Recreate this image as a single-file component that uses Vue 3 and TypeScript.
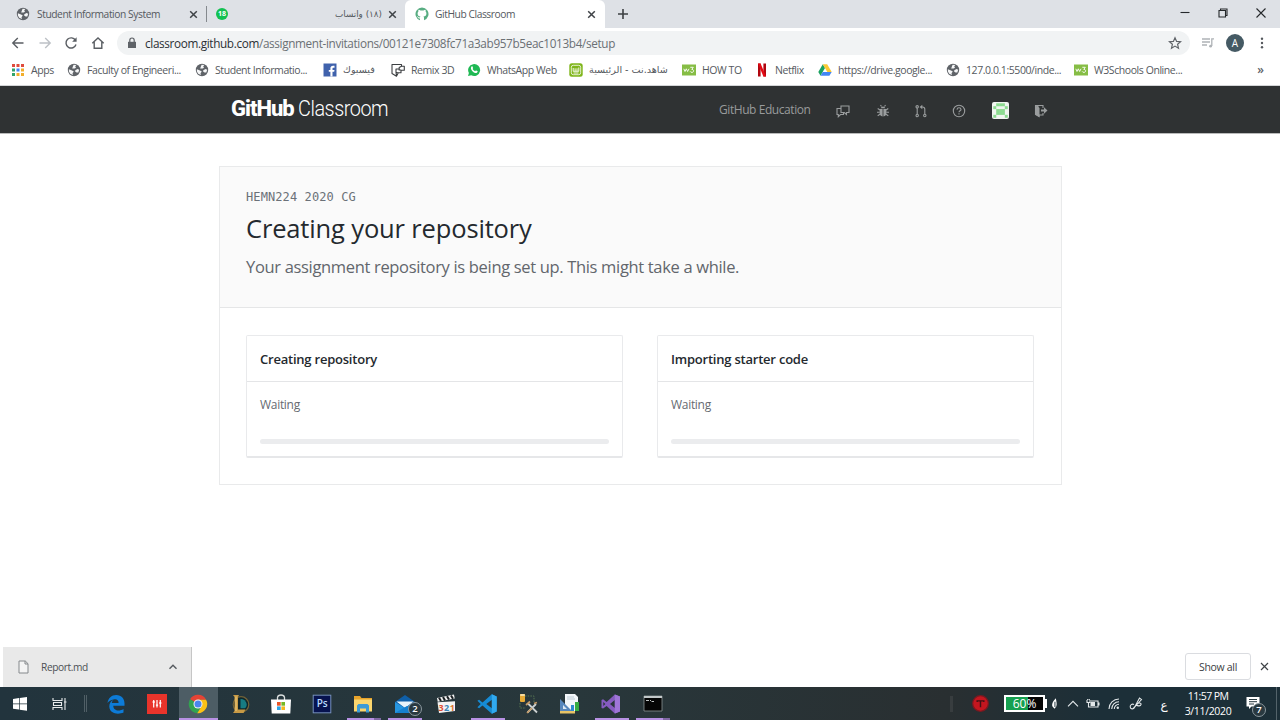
<script setup lang="ts">
interface Bookmark {
  icon: string
  label: string
  width: number
  rtl?: boolean
}

const bookmarks: Bookmark[] = [
  { icon: 'apps', label: 'Apps', width: 56 },
  { icon: 'globe', label: 'Faculty of Engineeri...', width: 128 },
  { icon: 'globe', label: 'Student Informatio...', width: 128 },
  { icon: 'facebook', label: 'فيسبوك', width: 68, rtl: true },
  { icon: 'remix', label: 'Remix 3D', width: 76 },
  { icon: 'whatsapp', label: 'WhatsApp Web', width: 102 },
  { icon: 'shahid', label: 'شاهد.نت - الرئيسية', width: 113, rtl: true },
  { icon: 'w3', label: 'HOW TO', width: 73 },
  { icon: 'netflix', label: 'Netflix', width: 63 },
  { icon: 'drive', label: 'https://drive.google...', width: 128 },
  { icon: 'globe', label: '127.0.0.1:5500/inde...', width: 128 },
  { icon: 'w3', label: 'W3Schools Online...', width: 120 },
]

const steps: { title: string; status: string }[] = [
  { title: 'Creating repository', status: 'Waiting' },
  { title: 'Importing starter code', status: 'Waiting' },
]

interface TaskApp {
  icon: string
  state?: 'active' | 'open' | 'stacked'
  badge?: string
}

const apps: TaskApp[] = [
  { icon: 'edge' },
  { icon: 'mixer' },
  { icon: 'chrome', state: 'active' },
  { icon: 'league' },
  { icon: 'store' },
  { icon: 'photoshop' },
  { icon: 'explorer', state: 'stacked' },
  { icon: 'mail', state: 'open', badge: '2' },
  { icon: 'clapper' },
  { icon: 'vscode', state: 'open' },
  { icon: 'tools' },
  { icon: 'chart' },
  { icon: 'visualstudio', state: 'open' },
  { icon: 'cmd', state: 'stacked' },
]

// Filled cells of the 5x5 identicon
const identicon: [number, number][] = [
  [1, 0], [2, 0], [3, 0],
  [0, 1], [4, 1],
  [1, 2], [2, 2], [3, 2],
  [1, 3], [2, 3], [3, 3],
  [0, 4], [4, 4],
]
</script>

<template>
  <div class="screen">
    <svg class="sprite" aria-hidden="true">
      <symbol id="globe" viewBox="0 0 14 14">
        <circle cx="7" cy="7" r="6.2" fill="#5f6368" />
        <path d="M1.9 6.2 5 7.4 6.8 8.6 5.5 10.2 6 12 3.2 10.7 1.9 8.4ZM6.6 1.8 9.3 2.1 8.2 3.6 9 4.7 7.6 5.4 5.2 5.6 5.8 3.7ZM8.3 7.2 10.5 6 12.2 6.8 11.3 9.4 9.6 9.6 8.1 8.5Z" fill="#f5f6f7" />
      </symbol>
      <symbol id="apps" viewBox="0 0 14 14">
        <path d="M1 1h3v3H1zM5.500 1h3v3h-3zM10 1h3v3h-3z" fill="#df4b3d" />
        <path d="M1 5.500h3v3H1zM1 10h3v3H1z" fill="#2fa36b" />
        <path d="M5.500 5.500h3v3h-3z" fill="#4285f4" />
        <path d="M10 5.500h3v3h-3zM5.500 10h3v3h-3zM10 10h3v3h-3z" fill="#f2ae2b" />
      </symbol>
      <symbol id="facebook" viewBox="0 0 14 14">
        <path d="M.5.5h13v13H.5z" fill="#4062ac" />
        <path d="M7.400 13.500V8.800H5.800V6.900h1.600V5.500c0-1.800 1-2.700 2.600-2.700h1.500v1.900h-1c-.8 0-1 .3-1 1v1.200h2l-.3 1.900H9.500v4.700z" fill="#fff" />
      </symbol>
      <symbol id="remix" viewBox="0 0 14 14">
        <path d="M1 1.500h9.500v1.800h2.800v4H10v2.500H7.300L5.500 13.200 1 10.500zM10.500 3.300 8.200 4.500v3M10 7.300 7.500 6H5v3.300M5 9.300l2.300.7M5.500 13.200 5 9.300" fill="none" stroke="#3c3f42" stroke-width="1.100" stroke-linejoin="round" />
      </symbol>
      <symbol id="whatsapp" viewBox="0 0 14 14">
        <path d="M1 13l.9-3A6 6 0 1 1 4.200 12.300Z" fill="#1fb954" />
        <path d="M4.400 3.700c.5-.5 1-.4 1.200.1l.5 1.100c.1.400-.4.800-.5 1 .5 1 1.300 1.800 2.500 2.300.3-.2.600-.8 1-.7l1.300.6c.5.300.2 1.300-.5 1.700-1 .6-2.700 0-4.200-1.400C4.200 6.900 3.300 5 4.400 3.700Z" fill="#fff" />
      </symbol>
      <symbol id="shahid" viewBox="0 0 14 14">
        <rect x=".3" y=".3" width="13.400" height="13.400" rx="2.500" fill="#7fb51b" />
        <rect x="2.300" y="2.300" width="9.400" height="9.400" rx="2" fill="none" stroke="#fff" stroke-width=".8" />
        <path d="M4.200 5v3.300h5.600V4.500M6.100 8V5.300M8 8V5.300M4.500 10h5" fill="none" stroke="#fff" stroke-width=".9" />
      </symbol>
      <symbol id="w3" viewBox="0 0 14 14">
        <path d="M0 1.500h14v11H0z" fill="#86bd45" />
        <path d="M1.800 5.800 3 8.500l1.300-2.700 1.300 2.700L7 5.800M8.300 4.300h3L9.800 6.400c2.400-.2 2.300 3 .2 3-.9 0-1.500-.4-1.800-1" fill="none" stroke="#fff" stroke-width=".9" />
      </symbol>
      <symbol id="netflix" viewBox="0 0 14 14">
        <path d="M3 .5h2.600v13H3zM8.400.5H11v13H8.400z" fill="#b1060f" />
        <path d="M3 .5h2.600L11 13.500H8.400z" fill="#e50914" />
      </symbol>
      <symbol id="drive" viewBox="0 0 14 14">
        <path d="M4.800 1.300.3 9l2.200 3.700L7 5z" fill="#1ba261" />
        <path d="M4.800 1.300h4.400L13.700 9H9.300z" fill="#fbc934" />
        <path d="M2.500 12.700 4.800 9h8.900l-2.300 3.700z" fill="#4286f5" />
      </symbol>
      <symbol id="edge" viewBox="0 0 20 20">
        <path d="M1.500 9C2.200 4 5.500 1 10.200 1 15.600 1 18.500 5 18.500 9.500v2.200H7.300c.1 5.400 6.300 5.700 10.200 3.200v3.700C13 20.500 3.800 20.500 3.300 12.800c-.2-3 1.400-5.500 4-6.700-1 1-1.300 2-1.500 3h6.800c0-3-1.500-4-4-3.800C5.600 5.500 3 7 1.500 9Z" fill="#0d7bd7" />
      </symbol>
      <symbol id="mixer" viewBox="0 0 20 20">
        <path d="M0 0h20v20H0z" fill="#e9342b" />
        <path d="M6.700 6v7.500M10 6v7.500M13.300 6v7.500" stroke="#fff" stroke-width="1.200" />
        <path d="M5.600 8h2.200M8.900 11.200h2.200M12.200 9h2.200" stroke="#fff" stroke-width="1.300" />
      </symbol>
      <symbol id="chrome" viewBox="0 0 20 20">
        <path d="M10 10 2 5.300A9.200 9.200 0 0 1 18.100 5.700H10Z" fill="#e54335" />
        <path d="M10 10 2 5.300A9.200 9.200 0 0 0 9.200 19.200L13.800 12Z" fill="#32a350" />
        <path d="M10 5.700h8.100A9.200 9.200 0 0 1 9.200 19.200L13.900 11.800Z" fill="#fbc116" />
        <circle cx="10" cy="10" r="4.500" fill="#f4f4f4" />
        <circle cx="10" cy="10" r="3.500" fill="#4a86ed" />
      </symbol>
      <symbol id="league" viewBox="0 0 20 20">
        <circle cx="11" cy="10.500" r="7.800" fill="#10272c" stroke="#736338" stroke-width="1.200" />
        <path d="M10.500 5a6 6 0 0 1 6.200 5c.2 2-.6 3.300-1.700 4.200h-4.500Z" fill="#177c83" />
        <path d="M3 1h6L8 2.800v12.700h7.500L13.500 19H3l1.500-2V3Z" fill="#c89a45" />
        <path d="M6 2.500V17" stroke="#f0ce80" stroke-width="1" />
      </symbol>
      <symbol id="store" viewBox="0 0 20 20">
        <path d="M6.500 6V3.300Q7 1 10 1t3.500 2.300V6" fill="none" stroke="#d9dddd" stroke-width="1.300" />
        <path d="M0 5.500h20l-.7 14H.7z" fill="#fff" />
        <path d="M6 8h3.700v3.700H6z" fill="#e85325" /><path d="M10.400 8H14v3.700h-3.600z" fill="#75b824" />
        <path d="M6 12.400h3.700V16H6z" fill="#2ba3e5" /><path d="M10.400 12.400H14V16h-3.600z" fill="#f4b81f" />
      </symbol>
      <symbol id="photoshop" viewBox="0 0 20 20">
        <rect x="1.200" y="1.200" width="17.600" height="17.600" fill="#07134f" stroke="#7691bd" stroke-width="1" />
      </symbol>
      <symbol id="explorer" viewBox="0 0 20 20">
        <path d="M1 2h6l1.500 2H19v13H1z" fill="#e7a32b" />
        <path d="M1 5.500h18v12H1z" fill="#fbd66e" />
        <path d="M4 18.500v-7L5.500 10h9l1.500 1.500v7h-3v-4H7v4z" fill="#3d9bd6" />
      </symbol>
      <symbol id="mail" viewBox="0 0 20 20">
        <path d="M0 8 10 1l10 7v11H0z" fill="#0f5fa8" />
        <path d="M1.500 7.500h17L10 14z" fill="#e9f4fa" />
        <path d="M0 8l10 6 10-6v11H0z" fill="#2695df" />
        <path d="M0 19 12 12l8 4v3z" fill="#1681d0" />
      </symbol>
      <symbol id="clapper" viewBox="0 0 20 20">
        <path d="M1 4 18 .5l.7 4L1.700 7.700z" fill="#f2f2f2" />
        <path d="m3 3.700 2 3.400M7 3l2 3.400M11 2.200l2 3.400M15 1.400l2 3.300" stroke="#191f22" stroke-width="2" />
        <path d="m1.500 8.300 17.500-1V17L3 19z" fill="#f4f4f4" />
      </symbol>
      <symbol id="vscode" viewBox="0 0 20 20">
        <path d="M14.800.3 19.700 2.400v15.200l-4.900 2.100L5.500 11.600l-3.400 2.700L.4 13.200 3.700 10 .4 6.800l1.700-1.100 3.400 2.700zM14.900 5.800 9.300 10l5.600 4.200z" fill="#168bd4" fill-rule="evenodd" />
        <path d="M14.800.3 19.700 2.400v15.200l-4.900 2.100z" fill="#31a9ef" />
      </symbol>
      <symbol id="tools" viewBox="0 0 20 20">
        <path d="M6 2h9v7M1 9v5h6" fill="none" stroke="#567451" stroke-width="1" stroke-dasharray="1.500 1.200" />
        <rect x="1" y="0" width="5" height="8" rx="1" fill="#e7aa35" /><rect x="1" y="0" width="5" height="2" rx="1" fill="#f7dda1" />
        <path d="m9 9.500 9 9M17 10l-8.500 8.500" stroke="#cbd0d1" stroke-width="1.800" />
        <path d="m7 11 4-3.500M15 9.500l3-1M8 19l5-5" stroke="#c39b67" stroke-width="1.700" />
      </symbol>
      <symbol id="chart" viewBox="0 0 20 20">
        <path d="M5 0h10l3 3v14H5z" fill="#f3f7fa" />
        <path d="M7 3h7M7 5h8" stroke="#afc0cc" stroke-width=".8" />
        <path d="M0 5v13h13z" fill="#5787bc" /><path d="M3 11v4h4z" fill="#dce8f2" />
        <path d="M11 11h3v6h-3z" fill="#2f8bd1" /><path d="M15 8h4v9h-4z" fill="#36ad42" />
        <path d="M0 17h15v2.500H0z" fill="#e8c466" />
      </symbol>
      <symbol id="visualstudio" viewBox="0 0 20 20">
        <path d="m13.800.4 5.200 2v15.200l-5.200 2-8.200-7.700-3.500 2.700L.5 14V6l1.600-.8 3.500 2.700zM13.800 6 9 10l4.800 4zM2.300 8v4L4.400 10z" fill="#865bc0" fill-rule="evenodd" />
        <path d="m13.800.4 5.200 2v15.200l-5.200 2z" fill="#9f75d8" />
      </symbol>
      <symbol id="cmd" viewBox="0 0 20 20">
        <path d="M1 2h18v15H1z" fill="#050606" stroke="#8c9495" stroke-width=".8" />
        <path d="M1 2h18v2H1z" fill="#c2c8c9" />
        <path d="M3 6.500h3M7 6.500h1M8.500 7.500H11" stroke="#bdc2c2" stroke-width="1" />
      </symbol>
    </svg>

    <!-- Browser tabs -->
    <div class="tabs">
      <div class="tab tab-first">
        <svg class="favicon"><use href="#globe" /></svg>
        <span class="tab-title">Student Information System</span>
        <svg class="close" viewBox="0 0 9 9"><path d="m1.200 1.200 6.600 6.600m0-6.600L1.200 7.800" /></svg>
      </div>
      <div class="tab tab-chat">
        <span class="unread">18</span>
        <span class="tab-title arabic" dir="rtl">(١٨) واتساب</span>
        <svg class="close" viewBox="0 0 9 9"><path d="m1.200 1.200 6.600 6.600m0-6.600L1.200 7.800" /></svg>
      </div>
      <div class="tab tab-active">
        <svg class="favicon" viewBox="0 0 14 14">
          <path d="M5 13.200A6.500 6.500 0 1 1 9 13.200V10.700c0-.7-.2-1.100-.6-1.300 2-.3 3-1 3-3 0-.9-.3-1.500-.8-2 .1-.5.1-1-.1-1.600-.8 0-1.500.5-2 .8a8 8 0 0 0-3 0c-.5-.3-1.200-.8-2-.8-.2.600-.2 1.100-.1 1.600-.5.5-.8 1.100-.8 2 0 2 1 2.700 3 3-.3.200-.5.500-.6.900-.8.300-1.500.1-2-.6-.3-.5-.6-.6-1-.6.900.7.700 2.200 2 2.400h1Z" fill="#58ad82" />
        </svg>
        <span class="tab-title">GitHub Classroom</span>
        <svg class="close" viewBox="0 0 9 9"><path d="m1.200 1.200 6.600 6.600m0-6.600L1.200 7.800" /></svg>
      </div>
      <svg class="plus" viewBox="0 0 12 12"><path d="M6 1v10M1 6h10" /></svg>
      <div class="window-controls">
        <svg viewBox="0 0 12 12"><path d="M1.500 5.500h9" /></svg>
        <svg viewBox="0 0 12 12"><path d="M2 3.500h6.500V10H2zM3.500 3.500V2H10v6.500H8.500" /></svg>
        <svg viewBox="0 0 12 12"><path d="m1.500 1.500 9 9m0-9-9 9" /></svg>
      </div>
    </div>

    <!-- Toolbar -->
    <div class="toolbar">
      <div class="nav-buttons">
        <svg viewBox="0 0 14 14"><path d="M12.500 7H2M6.800 2 1.800 7l5 5" /></svg>
        <svg class="disabled" viewBox="0 0 14 14"><path d="M1.500 7H12M7.200 2l5 5-5 5" /></svg>
        <svg viewBox="0 0 14 14"><path d="M11.500 4.300A5.100 5.100 0 1 0 12 8.500" /><path class="solid" d="M12.600 1.300v4.500H8.100z" /></svg>
        <svg viewBox="0 0 14 14"><path d="M1.300 7.300 7 2l5.700 5.300M3.200 6v6.200h7.600V6" /></svg>
      </div>
      <div class="address">
        <svg class="lock" viewBox="0 0 10 12"><path d="M1 4.800h8v6.200H1z" fill="#5f6368" /><path d="M2.800 5V3.200a2.200 2.200 0 0 1 4.400 0V5" fill="none" stroke="#5f6368" stroke-width="1.200" /></svg>
        <span class="url"><b>classroom.github.com</b>/assignment-invitations/00121e7308fc71a3ab957b5eac1013b4/setup</span>
        <svg class="star" viewBox="0 0 14 14"><path d="m7 1.700 1.600 3.700 4 .3-3 2.600.9 3.900L7 10.100l-3.500 2.100.9-3.900-3-2.600 4-.3z" /></svg>
      </div>
      <svg class="playlist" viewBox="0 0 14 12"><path d="M1 2h8M1 5h8M1 8h5M10.800 9V1.800H13" /><circle cx="9.600" cy="9.200" r="1.400" /></svg>
      <span class="profile">A</span>
      <svg class="dots" viewBox="0 0 4 12"><circle cx="2" cy="1.800" r="1.200" /><circle cx="2" cy="6" r="1.200" /><circle cx="2" cy="10.200" r="1.200" /></svg>
    </div>

    <!-- Bookmarks -->
    <div class="bookmarks">
      <div v-for="(b, i) in bookmarks" :key="i" class="bookmark" :style="{ width: b.width + 'px' }">
        <svg><use :href="'#' + b.icon" /></svg>
        <span :class="{ arabic: b.rtl }" :dir="b.rtl ? 'rtl' : 'ltr'">{{ b.label }}</span>
      </div>
      <span class="overflow">»</span>
    </div>

    <!-- Site header -->
    <header class="site-header">
      <div class="logo"><strong>GitHub</strong><span>Classroom</span></div>
      <nav class="site-nav">
        <span class="education">GitHub Education</span>
        <svg class="i-chat" viewBox="0 0 14 14"><path d="M5 2h8v6.500H10.500v2L8.300 8.500H5zM5 4.500H1v6h1.300v2.200L4.500 10.500h3v-2" /></svg>
        <svg class="i-bug" viewBox="0 0 14 14"><path class="solid" d="M4.700 4.200a2.400 2.400 0 0 1 4.600 0zM3.800 5h2.800v7.500C4.500 12.300 3.500 10.800 3.500 8.500zM7.400 5h2.800l.3 3.500c0 2.300-1 3.800-3.100 4z" /><path d="m5.500 2.500-1-1.300M8.500 2.500l1-1.300M4 6 1.700 4.500M3.600 8.300H1M4 10.300l-2.300 1.500M10 6l2.300-1.500M10.400 8.300H13M10 10.300l2.300 1.500" /></svg>
        <svg class="i-pull" viewBox="0 0 14 14"><circle cx="3.200" cy="2.800" r="1.200" /><circle cx="3.200" cy="11.500" r="1.200" /><circle cx="10.800" cy="11.500" r="1.200" /><path d="M3.200 4v6.300M10.800 10.300V5.300Q10.800 3 8.500 3H7" /><path class="solid" d="M8.300.7v4.600L5.600 3z" /></svg>
        <svg class="i-help" viewBox="0 0 14 14"><circle cx="7" cy="7" r="5.700" /><path d="M5 5.600C5.100 4.300 6 3.800 7 3.800s2 .6 2 1.600C9 6.800 7 6.800 7 8.200M7 9.200v1.400" /></svg>
        <svg class="avatar" viewBox="0 0 17 17">
          <rect width="17" height="17" rx="2" fill="#f1f6f1" />
          <rect v-for="([x, y], i) in identicon" :key="i" :x="1.3 + x * 2.88" :y="1.3 + y * 2.88" width="2.95" height="2.95" fill="#8ddc91" />
        </svg>
        <svg class="i-exit" viewBox="0 0 14 14"><path d="M9 4V1.500H1.500v9L5 12.500V11h4V9M2 1.500l3 2" /><path class="solid" d="M1.500 1.500 5.500 4v9L1.500 10.800zM7 5.500h3V3.300l3.500 3.200L10 9.700V7.500H7z" /></svg>
      </nav>
    </header>

    <!-- Assignment setup -->
    <main class="page">
      <section class="panel">
        <div class="panel-head">
          <div class="course">HEMN224 2020 CG</div>
          <h1>Creating your repository</h1>
          <p>Your assignment repository is being set up. This might take a while.</p>
        </div>
        <div class="steps">
          <article v-for="step in steps" :key="step.title" class="step">
            <h2>{{ step.title }}</h2>
            <div class="step-body">
              <div class="status">{{ step.status }}</div>
              <div class="progress"></div>
            </div>
          </article>
        </div>
      </section>
    </main>

    <!-- Download shelf -->
    <div class="shelf">
      <div class="download">
        <svg class="file" viewBox="0 0 12 14"><path d="M1.500 1h6.300l2.700 2.700V13h-9zM7.500 1v3h3" /></svg>
        <span class="filename">Report.md</span>
        <svg class="caret" viewBox="0 0 10 10"><path d="m1.500 6.800 3.500-3.500 3.500 3.500" /></svg>
      </div>
      <button class="show-all">Show all</button>
      <svg class="close shelf-close" viewBox="0 0 9 9"><path d="m1 1 7 7m0-7L1 8" /></svg>
    </div>

    <!-- Taskbar -->
    <footer class="taskbar">
      <svg class="start" viewBox="0 0 16 16"><path d="m1 3 6-.9v5.400H1zM7.700 2l7.300-1.100v6.600H7.700zM1 8.200h6v5.400L1 12.700zM7.700 8.200H15v6.600l-7.300-1.100z" /></svg>
      <svg class="taskview" viewBox="0 0 16 14"><path d="M1 1v2.500h9V1M1 13v-2.500h9V13M1.500 5.500h8v3h-8zM13 1v12M12 5h2.500" /></svg>
      <span class="grip"></span>
      <div class="apps">
        <div v-for="app in apps" :key="app.icon" class="app" :class="app.state">
          <svg><use :href="'#' + app.icon" /></svg>
          <span v-if="app.icon === 'photoshop'" class="ps">Ps</span>
          <span v-if="app.icon === 'clapper'" class="count"><i>3</i><i>2</i><i>1</i></span>
          <span v-if="app.badge" class="badge">{{ app.badge }}</span>
        </div>
      </div>
      <div class="tray">
        <span class="tray-grip"></span>
        <svg class="t-red" viewBox="0 0 18 18"><circle cx="9" cy="9" r="8.300" fill="#c3161f" /><path d="M9 .7a8.300 8.300 0 0 1 0 16.600 8.300 8.300 0 0 1 0-16.600" fill="none" stroke="#791920" stroke-width="1.300" /><path d="M5 6.200h8M9 6v7M5.500 5.500v2M12.500 5.500v2" stroke="#431115" stroke-width="1.500" /></svg>
        <span class="battery">60%</span>
        <svg class="t-plug" viewBox="0 0 8 14"><path d="M5.500 1C2 5 1 7 1.500 10L4 13l2-2.500c1-3 .3-5-.5-9.500Z" fill="#fff" /><path d="M4.500 5v6" stroke="#22343c" /></svg>
        <svg class="t-up" viewBox="0 0 12 12"><path d="m1 8.300 5-5 5 5" /></svg>
        <svg class="t-power" viewBox="0 0 14 12"><path d="M5 3h7v6H4M12.300 5H13v2h-.7M1 2v2.500h3V2M1.700 2V1M3.300 2V1M2.500 4.500V9H5" /><path class="solid" d="M4.500 4H9v4H4.500z" /></svg>
        <svg class="t-wifi" viewBox="0 0 14 14"><path d="M2 12A10 10 0 0 1 12 2M4.700 12A7.300 7.300 0 0 1 12 4.700M7.300 12A4.700 4.700 0 0 1 12 7.300" /><circle class="solid" cx="10.800" cy="10.800" r="1.200" /></svg>
        <svg class="t-link" viewBox="0 0 14 14"><path d="M5 7.500c-2-1-4 .5-3.800 2.500.2 2.300 3.300 2.500 4.300.5L10.500 1l2 1.500-5 5.500M7 8c2-2.500 5.500-2.500 5-.5-.5 1.500-3 2-4.500.5L4.500 11" /></svg>
        <span class="language">ع</span>
        <div class="clock"><span class="time">11:57 PM</span><span>3/11/2020</span></div>
        <div class="notice">
          <svg viewBox="0 0 15 14"><path d="M.5 1h13v9.500H5.500L3 13v-2.500H.5z" fill="#fff" /><path d="M3 3.500h8M3 5.700h8M3 8h5" stroke="#273940" stroke-width="1" /></svg>
          <span class="badge">7</span>
        </div>
        <span class="desktop-edge"></span>
      </div>
    </footer>
  </div>
</template>

<style>
body { margin: 0; overflow: hidden; }
</style>

<style scoped>
* { box-sizing: border-box; }
.screen {
  width: 1280px; height: 720px; display: flex; flex-direction: column;
  overflow: hidden; background: #fff; color: #5f6368;
  font-family: "Open Sans", "DejaVu Sans", sans-serif; white-space: nowrap;
}
.sprite { position: absolute; width: 0; height: 0; }
svg { flex: none; display: block; }
.arabic { font-family: "DejaVu Sans", sans-serif; }

.tabs { height: 28px; flex: none; display: flex; align-items: center; background: #dee1e6; }
.tab { height: 28px; display: flex; align-items: center; }
.tab-first { width: 207px; padding-left: 16px; border-right: 1px solid #85898e; height: 16px; }
.tab-chat { width: 198px; padding-left: 9px; }
.tab-active { width: 200px; padding-left: 10px; background: #fff; border-radius: 6px 6px 0 0; }
.favicon { width: 14px; height: 14px; }
.tab-title { flex: 1; margin-left: 7px; font-size: 10.25px; letter-spacing: -0.43px; color: #55595e; }
.tab-active .tab-title { margin-left: 6px; }
.tab-chat .tab-title { letter-spacing: 0; font-size: 8.8px; }
.close { width: 9px; height: 9px; margin-right: 8px; fill: none; stroke: #3f4347; stroke-width: 1.5; }
.tab-active .close { margin-right: 9px; }
.tab-chat .close { margin-left: 6px; margin-right: 8px; }
.unread { width: 12px; height: 12px; border-radius: 6px; background: #13c151; color: #fff; font-size: 7px; font-weight: 700; line-height: 12px; text-align: center; }
.plus { width: 12px; height: 12px; margin-left: 12px; stroke: #3c4043; stroke-width: 1.6; fill: none; }
.window-controls { margin-left: auto; margin-right: 13px; display: flex; gap: 26px; padding-bottom: 3px; }
.window-controls svg { width: 12px; height: 12px; fill: none; stroke: #25282b; stroke-width: 1.1; }

.toolbar { height: 30px; flex: none; display: flex; align-items: center; padding-left: 11px; }
.nav-buttons { display: flex; gap: 12.7px; width: 106px; }
.nav-buttons svg { width: 14px; height: 14px; fill: none; stroke: #5a5e63; stroke-width: 1.4; }
.nav-buttons .disabled { stroke: #bdc1c6; }
.nav-buttons .solid { fill: #5a5e63; stroke: none; }
.address { width: 1073px; height: 24px; border-radius: 12px; background: #f1f3f4; display: flex; align-items: center; padding: 0 8px 0 10px; }
.lock { width: 10px; height: 12px; }
.url { flex: 1; margin-left: 8px; font-size: 11.75px; letter-spacing: -0.355px; color: #6b7074; }
.url b { font-weight: 400; color: #2c3034; }
.star { width: 14px; height: 14px; fill: none; stroke: #5f6368; stroke-width: 1.2; }
.playlist { width: 14px; height: 12px; margin-left: 11px; fill: none; stroke: #aeb2b6; stroke-width: 1.3; }
.playlist circle { fill: #aeb2b6; stroke: none; }
.profile { width: 18px; height: 18px; margin-left: 11px; border-radius: 9px; background: #455a64; color: #fff; text-align: center; line-height: 18px; font-size: 10px; }
.dots { width: 4px; height: 12px; margin-left: 16px; fill: #55595e; }

.bookmarks { height: 28px; flex: none; display: flex; align-items: center; padding: 0 16px 4px 11px; border-bottom: 1px solid #d3d5d7; }
.bookmark { display: flex; align-items: center; flex: none; gap: 6px; font-size: 10.5px; letter-spacing: -0.43px; color: #55595e; }
.bookmark svg { width: 14px; height: 14px; }
.bookmark .arabic { font-size: 9.6px; letter-spacing: 0; }
.overflow { margin-left: auto; font-size: 12px; font-weight: 600; }

.site-header { height: 47px; flex: none; background: #2f3233; display: flex; align-items: flex-start; padding-left: 231px; box-shadow: 0 1px 0 #b9baba; }
.logo { width: 488px; height: 46px; display: flex; color: #fff; font: 22px/46px Roboto, sans-serif; }
.logo strong { font-weight: 800; letter-spacing: -1px; width: 67px; }
.logo span { font-weight: 300; letter-spacing: -0.5px; transform: scaleX(0.9); transform-origin: left; }
.site-nav { display: flex; align-items: center; height: 49px; color: #999b9c; }
.site-nav svg { width: 14px; height: 14px; fill: none; stroke: #9a9d9e; stroke-width: 1.1; }
.site-nav .solid { fill: #9a9d9e; stroke: none; }
.education { width: 117px; font-size: 12px; letter-spacing: -0.43px; padding-bottom: 2px; }
.site-nav .i-chat { margin-right: 26px; }
.site-nav .i-bug { margin-right: 24px; }
.site-nav .i-pull { margin-right: 24px; }
.site-nav .i-help { margin-right: 26px; }
.site-nav .avatar { width: 17px; height: 17px; margin-right: 25px; stroke: none; }

.page { flex: 1; padding: 33px 0 0 219px; }
.panel { width: 843px; height: 319px; border: 1px solid #e9eaeb; }
.panel-head { height: 141px; background: #fafafa; border-bottom: 1px solid #e5e6e7; padding: 21px 26px 0; }
.course { height: 19px; font: 12px/19px "DejaVu Sans Mono", monospace; letter-spacing: 0.1px; color: #6b7178; }
h1 { margin: 4px 0 0; height: 36px; font-size: 25.5px; font-weight: 400; line-height: 34px; letter-spacing: -0.15px; color: #24292e; }
p { margin: 8px 0 0; font-size: 16.5px; line-height: 24px; letter-spacing: -0.33px; color: #62666c; }
.steps { display: flex; gap: 34px; padding: 27px 26px; }
.step { width: 377px; height: 123px; border: 1px solid #e9eaec; border-bottom: 2px solid #e6e7e9; border-radius: 2px; }
h2 { margin: 0; height: 46px; padding: 0 13px; border-bottom: 1px solid #e4e5e7; font-size: 13px; font-weight: 600; line-height: 47px; color: #24292e; letter-spacing: -0.22px; }
.step-body { padding: 13px 13px 0; }
.status { height: 20px; font-size: 12px; line-height: 20px; color: #666a71; letter-spacing: -0.3px; }
.progress { height: 5px; margin-top: 24px; border-radius: 2.5px; background: #ebecee; }

.shelf { height: 41px; flex: none; display: flex; align-items: center; padding-left: 3px; }
.download { width: 189px; height: 40px; margin-top: 1px; display: flex; align-items: center; background: #e9e9e9; padding-left: 14px; border-right: 1px solid #c6c6c6; }
.file { width: 13px; height: 14px; fill: #f4f4f4; stroke: #85898c; stroke-width: 1; }
.filename { flex: 1; margin-left: 11px; font-size: 10.2px; letter-spacing: -0.4px; color: #4d5155; }
.caret { width: 10px; height: 10px; margin-right: 13px; fill: none; stroke: #55595e; stroke-width: 1.4; }
.show-all { margin-left: auto; width: 66px; height: 27px; border: 1px solid #dadce0; border-radius: 3px; background: #fff; color: #3c4043; font: 10.5px "Open Sans", sans-serif; letter-spacing: -0.3px; padding: 0; }
.shelf-close { margin-left: 9px; margin-right: 11px; stroke-width: 1.2; }

.taskbar { height: 33px; flex: none; display: flex; align-items: center; background: linear-gradient(90deg, #22343d, #28373b 45%, #292f31 74%, #1c2f38 86%); color: #fff; }
.start { width: 16px; height: 16px; margin-left: 12px; fill: #fff; }
.taskview { width: 16px; height: 14px; margin-left: 24px; fill: none; stroke: #e7eaeb; stroke-width: 1.1; }
.grip { width: 3px; height: 17px; margin-left: 16px; border: solid #505f66; border-width: 0 1px; }
.apps { display: flex; margin-left: 8px; }
.app { position: relative; width: 41.3px; height: 33px; display: flex; align-items: center; justify-content: center; }
.app svg { width: 20px; height: 20px; }
.app::after { content: ""; position: absolute; bottom: 0; height: 2px; left: 4px; right: 3px; }
.app.active { background: linear-gradient(90deg, transparent 1px, #4d5d65 1px, #4d5d65 40px, transparent 40px); }
.app.active::after { left: 1px; right: 1px; background: #b891e4; }
.app.open::after { background: #b891e4; }
.app.stacked::after { background: linear-gradient(90deg, #b891e4 27px, #8068a4 27px); }
.ps { position: absolute; left: 0; right: 0; top: 8px; font-size: 10px; font-weight: 600; line-height: 16px; text-align: center; color: #b8dcff; }
.count { position: absolute; left: 13px; top: 15px; display: flex; gap: 0.5px; font-size: 9px; font-weight: 700; line-height: 11px; }
.count i { font-style: normal; color: #e05032; }
.count i:nth-child(2) { color: #3b86b9; }
.count i:nth-child(3) { color: #dd7932; }
.badge { position: absolute; left: 24px; top: 15px; width: 14px; height: 14px; border: 1px solid #8b989e; border-radius: 7px; background: #293940; font-size: 9.5px; font-weight: 600; line-height: 12px; text-align: center; color: #fff; }
.tray { display: flex; align-items: center; margin-left: auto; width: 330px; height: 33px; }
.tray svg { fill: none; stroke: #e3e8ea; stroke-width: 1.1; }
.tray .solid { fill: #e3e8ea; stroke: none; }
.tray-grip { width: 3px; height: 16px; background: #383d3f; }
.tray .t-red { width: 17px; height: 17px; margin-left: 19px; stroke: none; }
.battery { position: relative; width: 41px; height: 17px; margin-left: 15px; border: 2px solid #fff; background: linear-gradient(90deg, #16a04f 60%, #050505 60%); font-size: 12px; line-height: 13px; text-align: center; }
.battery::after { content: ""; position: absolute; right: -4px; top: 2px; width: 2px; height: 9px; background: #fff; }
.tray .t-plug { width: 7px; height: 13px; margin-left: 6px; stroke: none; }
.tray .t-up { width: 12px; height: 12px; margin-left: 9px; }
.tray .t-power { width: 14px; height: 12px; margin-left: 7px; }
.tray .t-wifi { width: 14px; height: 14px; margin-left: 7px; }
.tray .t-link { width: 14px; height: 14px; margin-left: 8px; }
.language { width: 14px; margin-left: 14px; padding-top: 2px; font: 12px "DejaVu Sans", sans-serif; text-align: center; }
.clock { width: 64px; margin-left: 5px; display: flex; flex-direction: column; align-items: center; font-size: 10.5px; line-height: 15px; letter-spacing: -0.35px; }
.time { letter-spacing: -0.6px; }
.notice { position: relative; width: 30px; height: 33px; margin-left: 6px; padding-top: 9px; }
.notice svg { width: 15px; height: 14px; stroke: none; }
.notice .badge { left: 6px; top: 16px; }
.desktop-edge { width: 1px; height: 33px; background: #53636a; }
</style>
